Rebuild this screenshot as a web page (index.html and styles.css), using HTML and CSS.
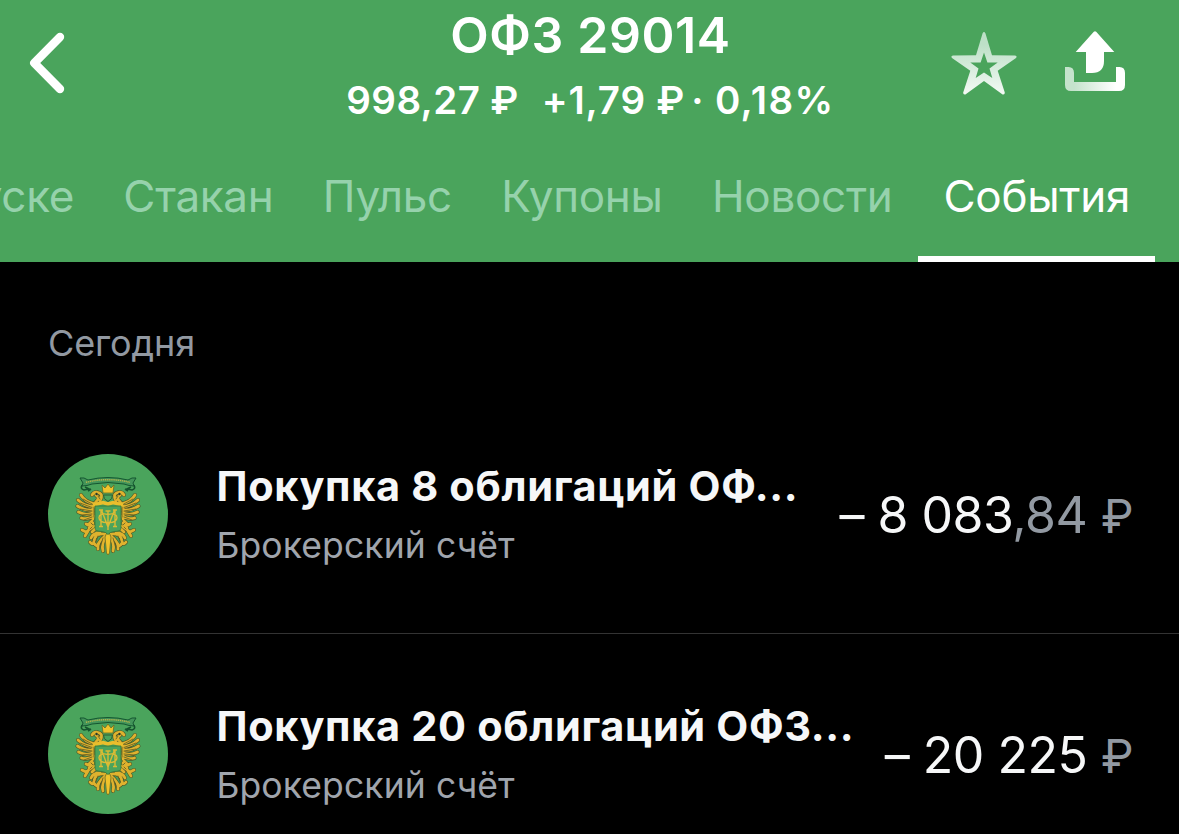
FILE: index.html
```html
<!DOCTYPE html>
<html lang="ru">
<head>
  <meta charset="UTF-8">
  <meta name="viewport" content="width=device-width, initial-scale=1.0">
  <title>ОФЗ 29014</title>
  <link rel="stylesheet" href="styles.css">
</head>
<body>
  <!-- shared emblem, left half is mirrored for the right one -->
  <svg class="sprite" aria-hidden="true">
    <defs>
      <g id="plumes">
        <path d="M47 50 Q37 48 33 41 M46 53 Q36 52 30 46 M45 56 Q37 57 29.500 52 M45 59 Q38 62 30.500 58 M46 62 Q40 66 33.500 64"/>
        <path d="M52 47 Q56 40 50 38.500 Q46 37.500 44 41 M48 41 L51 44 L47 49"/>
        <path d="M45 52 V65"/>
        <path d="M44 67 L40 71 L38 70 M45 69 L41 74 M46 72 L38 78 L34 76 M40 77 L37 82 M47 75 L44 78"/>
        <path d="M57 80 Q47 79 46 87 Q45 92 42 88 M57 82 Q49 88 50 95 M58 82 Q53 90 55 97 M52 79 Q45 79 43 84 M46 89 Q49 94 50 90"/>
      </g>
      <g id="half">
        <use href="#plumes" class="ink"/>
        <use href="#plumes" class="gold"/>
        <path class="detail" d="M45 50.500 L35 45 M44 53.500 L32 49 M44 57 L32 55 M44 60 L33 61 M44 63 L36 66 M50 42 L52 45 M46 53 V63 M43 69 L45 71 M42 75 L44 73 M50 82 L48 88 M55 84 L52 94"/>
        <circle class="dot" cx="48.500" cy="40" r="1.200"/>
        <path class="curl" d="M34 31 Q32 35 36 36 L41 35 L37 33 M40 37 L43 35"/>
      </g>
      <symbol id="emblem" viewBox="0 0 120 120">
        <use href="#half"/>
        <use href="#half" transform="translate(120 0) scale(-1 1)"/>
        <path class="ribbon" d="M32 24 Q36 23 40 26 Q60 21 80 26 Q84 23 88 24 L85 29 L86 32 Q81 32 76 30 Q60 27 44 30 Q39 32 34 32 L35 29 Z"/>
        <path class="motto" d="M38 28.300 Q60 23 82 28.300"/>
        <path class="crown" d="M54 31 L57 34 L60 30 L63 34 L66 31 L65 39 H55 Z"/>
        <path class="neck" d="M55.500 41 H64.500 Q65 45 60 47.500 Q55 45 55.500 41 Z"/>
        <path class="tail" d="M60 76 L63 83 L61.500 99 L60 101 L58.500 99 L57 83 Z"/>
        <path class="bar" d="M45 51 L55 48.500 L60 50 L65 48.500 L75 51"/>
        <path class="shield" d="M47 52 H73 V74 Q73 77.500 66 77.500 Q62 78 60 80.500 Q58 78 54 77.500 Q47 77.500 47 74 Z"/>
        <path class="mono" d="M51 56 H55 M65 56 H69 M53 56 V72 M67 56 V72 M51 72.500 H55 M65 72.500 H69 M53.500 56 L60 73 L66.500 56 M60 57 V76 M57.500 57 H62.500 M60 60.500 C48 57 48 70 60 68.500 C72 70 72 57 60 60.500"/>
      </symbol>
    </defs>
  </svg>

  <header class="header">
    <div class="topbar">
      <button class="back" aria-label="Назад">
        <svg width="48" height="64" viewBox="0 0 48 64"><path d="M40 6 L14.300 32 L40 58"/></svg>
      </button>
      <div class="heading">
        <h1 class="title">ОФЗ 29014</h1>
        <div class="quote">
          <span class="price">998,27 ₽</span>
          <span class="change">+1,79 ₽</span>
          <span class="point">·</span>
          <span class="percent">0,18%</span>
        </div>
      </div>
      <div class="actions">
        <svg class="star" width="68" height="66" viewBox="0 0 68 66">
          <defs>
            <linearGradient id="starFill" x1="0" y1="0" x2="0" y2="1">
              <stop offset="0.200" stop-color="#bde0c7"/>
              <stop offset="1" stop-color="#f4faf5"/>
            </linearGradient>
          </defs>
          <path fill="url(#starFill)" fill-rule="evenodd" d="M32.600 2.200 Q34 -.4 35.400 2.200 L42 24.200 L65 24.400 Q67.600 25.200 66 27 L47.700 39.700 L54.800 61.400 Q54.900 64 52.600 63.400 L34 50 L15.400 63.400 Q13 64 13.200 61.400 L20.300 39.700 L2 27 Q.4 25.200 3 24.400 L26 24.200 Z M34 21.400 L30.600 31.400 H20.300 L28.500 37.400 L25.700 47 L34 41.400 L42.300 47 L39.500 37.400 L47.700 31.400 H37.400 Z"/>
        </svg>
        <svg class="share" width="60" height="60" viewBox="0 0 60 60">
          <defs>
            <linearGradient id="trayFill" x1="0" y1="0" x2="1" y2="0">
              <stop offset="0.150" stop-color="#c5e3cc"/>
              <stop offset="0.850" stop-color="#ffffff"/>
            </linearGradient>
          </defs>
          <path fill="#fff" d="M28.800 .8 Q30 -.4 31.200 .8 L49.300 21 H39 V30 Q39 42 27 42 H21 V21 H10.700 Z"/>
          <path fill="url(#trayFill)" d="M0 36 H3.500 Q9 36 9 42 V51 H51 V36 H54.500 Q60 36 60 42 V54 Q60 60 54 60 H6 Q0 60 0 54 Z"/>
        </svg>
      </div>
    </div>
    <nav class="tabs">
      <a class="tab">О выпуске</a>
      <a class="tab">Стакан</a>
      <a class="tab">Пульс</a>
      <a class="tab">Купоны</a>
      <a class="tab">Новости</a>
      <a class="tab active">События</a>
    </nav>
  </header>

  <main>
    <h2 class="date">Сегодня</h2>
    <article class="row">
      <svg class="logo"><use href="#emblem"/></svg>
      <div class="info">
        <div class="name">Покупка 8 облигаций ОФ...</div>
        <div class="account">Брокерский счёт</div>
      </div>
      <div class="amount">– 8 083<span class="minor">,84 <span class="ruble">₽</span></span></div>
    </article>
    <article class="row">
      <svg class="logo"><use href="#emblem"/></svg>
      <div class="info">
        <div class="name">Покупка 20 облигаций ОФЗ...</div>
        <div class="account">Брокерский счёт</div>
      </div>
      <div class="amount">– 20 225 <span class="minor ruble">₽</span></div>
    </article>
  </main>
</body>
</html>
```
FILE: styles.css
```css
* { box-sizing: border-box; }
body { margin: 0; height: 834px; overflow: hidden; background: #000; color: #f6f7f8; font-family: Inter, "Liberation Sans", sans-serif; }
.sprite { display: block; width: 0; height: 0; }

.header { height: 262px; background: #4aa45c; color: #fff; overflow: hidden; }
.topbar { display: grid; grid-template-columns: 342px 1fr 340px; height: 132px; }
.back { width: 48px; height: 64px; margin: 31px 0 0 20px; padding: 0; background: none; border: none; }
.back svg { display: block; fill: none; stroke: #fff; stroke-width: 8.4; stroke-linecap: round; stroke-linejoin: round; }
.heading { text-align: center; white-space: nowrap; }
.title { margin: 5px 0 0; font-size: 50px; line-height: 60px; font-weight: 560; letter-spacing: 0.6px; }
.quote { display: flex; justify-content: center; margin-top: 11px; font-size: 38.5px; line-height: 48px; font-weight: 560; letter-spacing: 0.4px; }
.change { margin: 0 6px 0 23px; letter-spacing: 0.8px; }
.percent { margin-left: 11px; letter-spacing: 1.4px; }
.actions { display: flex; justify-content: flex-end; gap: 47px; padding: 31px 54px 0 0; }

.tabs { display: flex; justify-content: flex-end; height: 130px; padding-right: 24px; white-space: nowrap; }
.tab { flex: none; padding: 36px 25px 0 24.3px; font-size: 44px; line-height: 56px; letter-spacing: -0.3px; color: #96d2ac; }
.tab.active { padding-left: 26px; color: #fff; border-bottom: 6px solid #fff; }

.date { margin: 59px 0 0 48px; font-size: 36px; line-height: 44px; font-weight: 400; letter-spacing: -0.1px; color: #9299a2; }
.row { display: flex; align-items: center; height: 240px; padding: 0 46px 0 48px; }
.date + .row { margin-top: 29px; box-shadow: inset 0 -1px #333; }
.logo { flex: none; width: 120px; height: 120px; border-radius: 50%; background: #4aa45c; }
.info { flex: none; margin-left: 48.5px; white-space: nowrap; }
.name { font-size: 41.5px; line-height: 52px; font-weight: 690; letter-spacing: 0.65px; }
.account { margin-top: 11px; font-size: 35.5px; line-height: 46px; letter-spacing: 0.1px; color: #a0a5ad; }
.amount { margin-left: auto; padding-top: 3px; font-size: 50px; line-height: 60px; letter-spacing: -0.5px; white-space: nowrap; }
.minor { color: #9299a2; }
.ruble { font-size: 46.5px; }

/* emblem */
.ink, .gold, .detail { fill: none; stroke-linecap: round; stroke-linejoin: round; }
.ink { stroke: #4c5727; stroke-width: 4; }
.gold { stroke: #dfb22e; stroke-width: 2.8; }
.detail { stroke: #5d5a24; stroke-width: 0.8; }
.dot { fill: #263c2c; }
.curl { fill: none; stroke: #15542e; stroke-width: 1.6; }
.ribbon { fill: #43955a; stroke: #155631; stroke-width: 1; }
.motto { fill: none; stroke: #b5b34b; stroke-width: 1.5; stroke-dasharray: 1.2 0.7; }
.crown, .tail { fill: #efc32c; stroke: #6c6c25; stroke-width: 0.8; }
.neck { fill: #4aa45c; stroke: #315b30; stroke-width: 1; }
.bar { fill: none; stroke: #e9be2c; stroke-width: 3.6; }
.shield { fill: #4aa45c; stroke: #377438; stroke-width: 0.8; }
.mono { fill: none; stroke: #d9bb35; stroke-width: 1.4; }
```
